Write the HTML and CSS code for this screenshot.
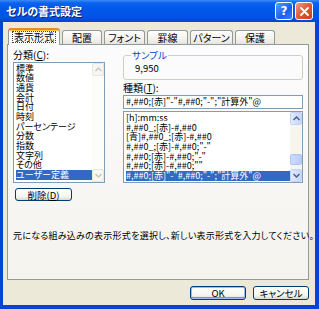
FILE: index.html
```html
<!DOCTYPE html>
<html lang="ja">
<head>
    <meta charset="UTF-8">
    <title>セルの書式設定</title>
    <link rel="stylesheet" href="styles.css">
</head>
<body>
    <div class="window">
        <div class="titlebar">
            <span class="title">セルの書式設定</span>
            <span class="cap help">?</span>
            <span class="cap close">
                <svg width="9" height="9" viewBox="0 0 9 9"><path d="M1 1L8 8M8 1L1 8" stroke="#fff" stroke-width="1.8" stroke-linecap="round"/></svg>
            </span>
        </div>
        <div class="client">
            <div class="tabs">
                <span class="tab active"><span class="focus">表示形式</span></span>
                <span class="tab">配置</span>
                <span class="tab">フォント</span>
                <span class="tab">罫線</span>
                <span class="tab">パターン</span>
                <span class="tab">保護</span>
            </div>
            <div class="panel">
                <div class="cols">
                    <div class="left">
                        <div class="label">分類(<u>C</u>):</div>
                        <div class="listbox cat">
                            <div class="items">
                                <div>標準</div>
                                <div>数値</div>
                                <div>通貨</div>
                                <div>会計</div>
                                <div>日付</div>
                                <div>時刻</div>
                                <div>パーセンテージ</div>
                                <div>分数</div>
                                <div>指数</div>
                                <div>文字列</div>
                                <div>その他</div>
                                <div class="sel">ユーザー定義</div>
                            </div>
                            <div class="vscroll off">
                                <span class="sbtn"><svg width="7" height="5" viewBox="0 0 7 5"><path d="M0.5 4L3.5 1L6.5 4" fill="none" stroke="#c9c7ba" stroke-width="1.4"/></svg></span>
                                <span class="track"></span>
                                <span class="sbtn"><svg width="7" height="5" viewBox="0 0 7 5"><path d="M0.5 1L3.5 4L6.5 1" fill="none" stroke="#c9c7ba" stroke-width="1.4"/></svg></span>
                            </div>
                        </div>
                        <button class="btn del">削除(<u>D</u>)</button>
                    </div>
                    <div class="right">
                        <fieldset class="sample">
                            <legend>サンプル</legend>
                            <div>9,950</div>
                        </fieldset>
                        <div class="label">種類(<u>T</u>):</div>
                        <div class="textbox">#,##0;[赤]"-"#,##0;"-";"計算外"@</div>
                        <div class="listbox fmt">
                            <div class="items">
                                <div>[h]:mm:ss</div>
                                <div>#,##0_;[赤]-#,##0</div>
                                <div>[青]#,##0_;[赤]-#,##0</div>
                                <div>#,##0_;[赤]-#,##0;"-"</div>
                                <div>#,##0;[赤]-#,##0;"-"</div>
                                <div>#,##0;[赤]-#,##0;""</div>
                                <div class="sel">#,##0;[赤]"-"#,##0;"-";"計算外"@</div>
                            </div>
                            <div class="vscroll">
                                <span class="sbtn"><svg width="7" height="5" viewBox="0 0 7 5"><path d="M0.5 4L3.5 1L6.5 4" fill="none" stroke="#4d6185" stroke-width="1.5"/></svg></span>
                                <span class="track"><span class="thumb"></span></span>
                                <span class="sbtn"><svg width="7" height="5" viewBox="0 0 7 5"><path d="M0.5 1L3.5 4L6.5 1" fill="none" stroke="#4d6185" stroke-width="1.5"/></svg></span>
                            </div>
                        </div>
                    </div>
                </div>
                <p class="desc">元になる組み込みの表示形式を選択し、新しい表示形式を入力してください。</p>
            </div>
            <div class="actions">
                <button class="btn default">OK</button>
                <button class="btn">キャンセル</button>
            </div>
        </div>
    </div>
</body>
</html>
```

FILE: styles.css
```css
body {
    margin: 0;
    font-family: "Noto Sans CJK JP", sans-serif;
    font-size: 10px;
    font-feature-settings: "palt";
    color: #000;
}
.window {
    width: 319px;
    height: 309px;
    display: flex;
    flex-direction: column;
    background: #0842d6;
}
.titlebar {
    height: 22px;
    display: flex;
    align-items: center;
    padding: 0 6px 0 6px;
    background: linear-gradient(#3d8bf5 0, #0a62f0 3px, #0058ec 40%, #0153e2 80%, #0046cc 100%);
}
.title {
    flex: 1;
    color: #fff;
    font-size: 11px;
    font-weight: bold;
    text-shadow: 1px 1px 0 #0a1f7a;
}
.cap {
    width: 16px;
    height: 16px;
    margin-left: 2px;
    border: 1px solid #fff;
    border-radius: 3px;
    display: flex;
    align-items: center;
    justify-content: center;
    color: #fff;
    font-family: "DejaVu Sans", sans-serif;
    font-weight: bold;
    font-size: 12px;
}
.help {
    background: linear-gradient(135deg, #5b9bff, #1b5ef0 60%, #3f7df5);
}
.close {
    background: linear-gradient(135deg, #f49c7c, #e05a30 50%, #c8401a);
}
.client {
    flex: 1;
    margin: 0 4px 4px 3px;
    padding: 6px 6px 5px 4px;
    background: #ece9d8;
    display: flex;
    flex-direction: column;
}
.tabs {
    height: 16px;
    display: flex;
    align-items: flex-end;
    gap: 2px;
    padding-left: 1px;
}
.tab {
    box-sizing: border-box;
    height: 14px;
    display: flex;
    align-items: center;
    justify-content: center;
    border: 1px solid #919b9c;
    border-bottom: none;
    border-radius: 3px 3px 0 0;
    background: linear-gradient(#fefefe, #f3f2ee 60%, #e6e4dc);
}
.tab:nth-child(1) { width: 52px; }
.tab:nth-child(2) { width: 40px; }
.tab:nth-child(3) { width: 41px; }
.tab:nth-child(4) { width: 41px; }
.tab:nth-child(5) { width: 43px; }
.tab:nth-child(6) { width: 40px; }
.tab.active {
    height: 17px;
    margin-bottom: -1px;
    position: relative;
    z-index: 1;
    background: #fcfcfe;
    border-top: 2px solid #e68b2c;
    box-shadow: inset 0 1px 0 #ffc73c;
    padding-bottom: 1px;
}
.focus {
    border: 1px dotted #444;
    padding: 0 1px;
    line-height: 10px;
}
.panel {
    flex: 1;
    border: 1px solid #919b9c;
    background: linear-gradient(#fcfcfe, #f4f3ee);
    padding: 5px 5px 0 5px;
}
.cols {
    display: grid;
    grid-template-columns: 92px 180px;
    column-gap: 18px;
}
.label {
    line-height: 10px;
    height: 10px;
}
.listbox {
    box-sizing: border-box;
    border: 1px solid #7f9db9;
    background: #fff;
    display: flex;
}
.items {
    flex: 1;
    font-size: 9px;
    line-height: 9.7px;
    padding-left: 2px;
    white-space: nowrap;
    overflow: hidden;
}
.items div {
    height: 9.7px;
}
.sel {
    background: #316ac5;
    color: #fff;
}
.cat {
    height: 121px;
    margin-top: 2px;
}
.cat .items {
    padding-top: 0.5px;
}
.fmt .items {
    padding-top: 1px;
}
.vscroll {
    width: 12px;
    display: flex;
    flex-direction: column;
    background: #f6f5f0;
}
.vscroll.off {
    background: #fcfcf9;
}
.sbtn {
    box-sizing: border-box;
    height: 13px;
    display: flex;
    align-items: center;
    justify-content: center;
    border: 1px solid #c3d3fd;
    border-radius: 2px;
    background: linear-gradient(90deg, #e1eafe, #c5d5fc);
}
.off .sbtn {
    border-color: #e8e6dd;
    background: #f7f6f1;
}
.track {
    flex: 1;
    display: flex;
    flex-direction: column;
}
.thumb {
    height: 9px;
    margin-top: auto;
    margin-bottom: 4px;
    border: 1px solid #b0c2f2;
    border-radius: 2px;
    background: linear-gradient(90deg, #cddbfd, #b8cbfa);
}
.btn {
    box-sizing: border-box;
    font-family: inherit;
    font-size: 9.5px;
    font-feature-settings: "palt";
    padding: 0;
    border: 1px solid #003c74;
    border-radius: 3px;
    background: linear-gradient(#fffffe, #f4f4ef 70%, #dcd7cb);
    color: #000;
    line-height: 10px;
}
.del {
    width: 57px;
    height: 13px;
    margin: 5px 0 0 2px;
}
.sample {
    margin: 0;
    padding: 3px 10px 6px 11px;
    border: 1px solid #d0d0bf;
    border-radius: 3px;
    line-height: 10px;
    font-size: 9.5px;
}
.sample legend {
    padding: 0 1px;
    margin-left: -4px;
    color: #0046d5;
    line-height: 10px;
}
.right .label {
    margin-top: 3px;
}
.textbox {
    box-sizing: border-box;
    height: 14px;
    margin-top: 2px;
    border: 1px solid #7f9db9;
    background: #fff;
    padding-left: 2px;
    font-size: 9px;
    line-height: 12px;
    white-space: nowrap;
    overflow: hidden;
}
.fmt {
    height: 72px;
    margin-top: 2px;
}
.desc {
    margin: 28px 0 0 0;
    font-size: 9px;
    line-height: 11px;
    white-space: nowrap;
    letter-spacing: 0.25px;
}
.actions {
    display: flex;
    justify-content: flex-end;
    gap: 7px;
    margin-top: 6px;
}
.actions .btn {
    width: 56px;
    height: 14px;
}
.btn.default {
    box-shadow: inset 0 0 0 1px #9cbbf2, inset 0 -1px 0 1px #6f97e8;
}
```
